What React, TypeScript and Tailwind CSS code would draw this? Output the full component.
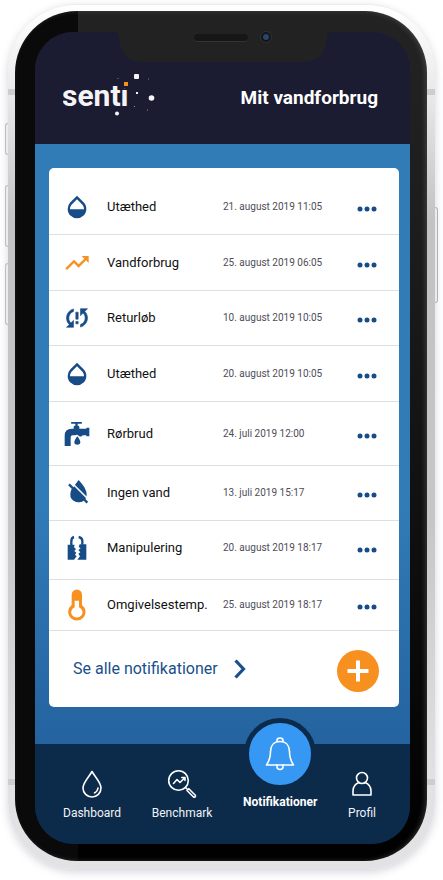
import type { ReactNode } from "react";
import { MdOpacity, MdTrendingUp } from "react-icons/md";

function FaucetIcon() {
  return (
    <svg width="26" height="26" viewBox="76 60 78 78" fill="currentColor" aria-hidden="true">
      <rect x="97" y="63" width="33" height="5" rx="2" />
      <rect x="110" y="66" width="7" height="12" />
      <path d="M105 83v-5q0-4 4-4h9q4 0 4 4v5h21v-3h9v26h-9v-3h-11q-4 6-11 2-6-7-12-2h-7q-6 0-6 6v26H78V104q0-21 21-21z" />
      <path d="M116 106q9 12 9 17a9 8 0 0 1-18 0q0-5 9-17z" stroke="#fff" strokeWidth="3" paintOrder="stroke" />
    </svg>
  );
}

function BackflowIcon() {
  return (
    <svg width="28" height="28" viewBox="0 0 24 24" fill="currentColor" stroke="currentColor" strokeWidth="0.500" aria-hidden="true">
      <path d="M3 12c0 2.210.91 4.200 2.360 5.640L3 20h6v-6l-2.240 2.240C5.680 15.150 5 13.660 5 12c0-2.610 1.670-4.830 4-5.650V4.260C5.550 5.150 3 8.270 3 12zm8 5h2v-2h-2v2zM21 4h-6v6l2.240-2.240C18.320 8.850 19 10.340 19 12c0 2.610-1.670 4.830-4 5.650v2.090c3.450-.89 6-4.010 6-7.740 0-2.210-.91-4.200-2.360-5.640L21 4zm-10 9h2V7h-2v6z" />
    </svg>
  );
}

function NoWaterIcon() {
  return (
    <svg width="28" height="28" viewBox="9 10 84 84" fill="none" aria-hidden="true">
      <path d="M56 13C68 26 80 42 80 57a23 23 0 0 1-46 0C34 42 45 26 56 13z" fill="currentColor" />
      <path d="M36 22l54 54" stroke="#fff" strokeWidth="5" />
      <path d="M36 38C32 46 31 52 31 56a24 22 0 0 0 41 17z" fill="currentColor" />
      <path d="M27 26l55 55" stroke="currentColor" strokeWidth="7" />
    </svg>
  );
}

function BrokenLockIcon() {
  return (
    <svg width="26" height="26" viewBox="74 399 78 78" fill="currentColor" aria-hidden="true">
      <path d="M85 428h21l-2 8 6 5-5 6 6 5-4 6 5 5-8 10H85z" />
      <path d="M141 427h-20l-3 8 6 4-7 5 6 7-6 4 5 8-8 10h27z" />
      <path d="M96 430v-12q0-11 8-13" fill="none" stroke="currentColor" strokeWidth="7" />
      <path d="M129 428v-11q0-10-11-12" fill="none" stroke="currentColor" strokeWidth="7" />
    </svg>
  );
}

function ThermometerIcon() {
  return (
    <svg width="18" height="32" viewBox="91 562 54 96" aria-hidden="true">
      <path
        d="M102 610V579a15.500 15.500 0 0 1 31 0v31a26 26 0 1 1-31 0z"
        fill="#f7901e"
      />
      <path d="M111 597h13v20a17 16 0 1 1-13 0z" fill="#fff" />
    </svg>
  );
}

function MoreIcon() {
  return (
    <svg width="20" height="6" viewBox="0 0 20 6" fill="currentColor" aria-hidden="true">
      <circle cx="3" cy="3" r="2.500" />
      <circle cx="10" cy="3" r="2.500" />
      <circle cx="17" cy="3" r="2.500" />
    </svg>
  );
}

function SentiLogo() {
  return (
    <svg width="96" height="48" viewBox="0 0 96 48" role="img" aria-label="senti" fill="#f4f4f6">
      <text x="-1" y="34" fontSize="30" fontWeight="700" fontFamily="Roboto, sans-serif">
        senti
      </text>
      <rect x="58" y="8" width="10" height="8" fill="#1b1b32" />
      <rect x="61" y="10" width="4" height="4" fill="#f7901e" />
      <rect x="71" y="2" width="5" height="5" rx="1" />
      <rect x="73" y="20" width="2" height="2" />
      <circle cx="88.500" cy="26" r="2.800" />
      <circle cx="54" cy="41.500" r="2" />
      <circle cx="55" cy="6.500" r="0.500" opacity="0.600" />
      <circle cx="85.500" cy="7" r="0.500" opacity="0.600" />
      <circle cx="71.500" cy="34.500" r="0.600" opacity="0.600" />
      <circle cx="84.500" cy="38" r="0.600" opacity="0.600" />
    </svg>
  );
}

function Notch() {
  return (
    <svg
      className="absolute top-0 left-1/2 -translate-x-1/2"
      width="216"
      height="31"
      viewBox="0 0 216 31"
      aria-hidden="true"
    >
      <path d="M0 0q4 0 4 6Q6 30 28 30h160q22 0 24-24 0-6 4-6z" fill="#222" />
    </svg>
  );
}

const stroke = {
  fill: "none",
  stroke: "#fff",
  strokeWidth: 1.6,
  strokeLinecap: "round",
  strokeLinejoin: "round",
} as const;

function DropIcon() {
  return (
    <svg width="28" height="28" viewBox="0 0 28 28" {...stroke} aria-hidden="true">
      <path d="M14 1.500C11 7 5 12.500 5 18a9 9 0 0 0 18 0C23 12.500 17 7 14 1.500z" />
      <path d="M20 18q-.5 3.500-3.500 5" />
    </svg>
  );
}

function BenchmarkIcon() {
  return (
    <svg width="30" height="30" viewBox="0 0 30 30" {...stroke} aria-hidden="true">
      <circle cx="11.500" cy="11.500" r="9.800" />
      <path d="M6.500 14.500l3.500-4 3 3 5-5M14.800 8.500H18v3" />
      <path d="M18.500 18.500l2 2M20 21.500l1.800-1.800 6.500 6.500a1.300 1.300 0 0 1-1.800 1.800z" />
    </svg>
  );
}

function BellIcon() {
  return (
    <svg width="30" height="34" viewBox="0 0 30 34" {...stroke} aria-hidden="true">
      <path d="M12 4.500V3.500a3 2.500 0 0 1 6 0v1" />
      <path d="M15 4.500c-6 0-9.500 4-9.500 10 0 6-1 9-4 13.500h27c-3-4.500-4-7.500-4-13.500 0-6-3.500-10-9.500-10z" />
      <path d="M12 28v1.500a3 3 0 0 0 6 0V28" />
    </svg>
  );
}

function ProfileIcon() {
  return (
    <svg width="22" height="26" viewBox="0 0 22 26" {...stroke} aria-hidden="true">
      <circle cx="11" cy="7" r="5.500" />
      <path d="M8 11.500C4 13 2 16 2 20v4h18v-4c0-4-2-7-6-8.500" />
    </svg>
  );
}

type Notification = { label: string; date: string; icon: ReactNode; row: string };

const notifications: Notification[] = [
  { label: "Utæthed", date: "21. august 2019 11:05", icon: <MdOpacity size={28} />, row: "h-[67px] pt-3" },
  { label: "Vandforbrug", date: "25. august 2019 06:05", icon: <MdTrendingUp size={28} color="#f7901e" />, row: "h-[56px]" },
  { label: "Returløb", date: "10. august 2019 10:05", icon: <BackflowIcon />, row: "h-[55px]" },
  { label: "Utæthed", date: "20. august 2019 10:05", icon: <MdOpacity size={28} />, row: "h-[56px]" },
  { label: "Rørbrud", date: "24. juli 2019 12:00", icon: <FaucetIcon />, row: "h-[64px]" },
  { label: "Ingen vand", date: "13. juli 2019 15:17", icon: <NoWaterIcon />, row: "h-[55px]" },
  { label: "Manipulering", date: "20. august 2019 18:17", icon: <BrokenLockIcon />, row: "h-[59px] pb-1" },
  { label: "Omgivelsestemp.", date: "25. august 2019 18:17", icon: <ThermometerIcon />, row: "h-[51px]" },
];

function NotificationRow({ label, date, icon, row }: Notification) {
  return (
    <li
      className={`grid grid-cols-[44px_116px_1fr_auto] items-center border-b border-[#dedfe1] pr-[22px] pl-[14px] text-[#184c86] ${row}`}
    >
      <span className="flex w-7 justify-center">{icon}</span>
      <span className="text-[13px] leading-4 text-[#111]">{label}</span>
      <time className="text-[10px] leading-4 text-[#4d4d58]">{date}</time>
      <button type="button" aria-label={`Flere valg for ${label}`} className="flex items-center pt-1">
        <MoreIcon />
      </button>
    </li>
  );
}

function NavItem({ label, icon }: { label: string; icon: ReactNode }) {
  return (
    <a href="#" className="flex flex-col items-center gap-[5px] pt-6 text-[12px] leading-4 text-[#f0f3f7]">
      <span className="flex h-8 items-center justify-center">{icon}</span>
      {label}
    </a>
  );
}

export default function App() {
  return (
    <div className="min-h-screen bg-white px-2 pt-1 pb-3 font-['Roboto',sans-serif]">
      <div className="relative rounded-[68px] border-t border-[#ececec] bg-[linear-gradient(#fff,#ececec_9%,#c2c2c2_25%,#c6c6c6_60%,#e2e2e4_90%,#e2e2e4)] pt-1.5 pr-2 pb-2 pl-[7px] shadow-[0_3px_8px_rgba(60,60,100,0.22)]">
        <span className="absolute top-[118px] -left-[3px] h-8 w-[3px] rounded-l-sm border border-r-0 border-[#bdbdc3] bg-[#ececf0]" />
        <span className="absolute top-[180px] -left-[3px] h-[62px] w-[3px] rounded-l-sm border border-r-0 border-[#bdbdc3] bg-[#ececf0]" />
        <span className="absolute top-[258px] -left-[3px] h-[62px] w-[3px] rounded-l-sm border border-r-0 border-[#bdbdc3] bg-[#ececf0]" />
        <span className="absolute top-[202px] -right-[3px] h-24 w-[3px] rounded-r-sm border border-l-0 border-[#b0b0b6] bg-[#ececf0]" />
        <span className="absolute inset-x-0 top-[84px] h-1.5 bg-[#cdcdcd]" />
        <span className="absolute inset-x-0 bottom-[84px] h-1.5 bg-[#cdcdcd]" />

        <div className="relative rounded-[62px] bg-[linear-gradient(#0a0a0a,#0a0a0a),linear-gradient(#232323,#1d1d1d_25%,#101010_60%,#000)] bg-[length:63px_100%,100%_100%] bg-no-repeat pt-[21px] pr-[17px] pb-[17px] pl-5 shadow-[inset_-2px_0_5px_rgba(120,120,120,0.35)]">
          <div className="relative overflow-hidden rounded-[38px] bg-[#0c2a4a]">
            <Notch />
            <header className="flex h-28 items-center justify-between bg-[#1b1b32] pt-5 pr-8 pl-7">
              <div className="-mt-1">
                <SentiLogo />
              </div>
              <h1 className="text-[19px] leading-6 font-bold text-white">Mit vandforbrug</h1>
            </header>

            <main className="bg-[linear-gradient(#317bb6,#317bb6_60%,#24639f)] pt-6 pr-[11px] pb-[37px] pl-[14px]">
              <section className="rounded-[5px] bg-white">
                <ul>
                  {notifications.map((item) => (
                    <NotificationRow key={item.date} {...item} />
                  ))}
                </ul>
                <div className="flex h-[76px] items-center justify-between pr-5 pl-6 text-[#1a4f8b]">
                  <a href="#" className="flex items-center gap-4 text-[16px] leading-6">
                    Se alle notifikationer
                    <svg width="12" height="20" viewBox="0 0 12 20" fill="none" stroke="currentColor" strokeWidth="3.200" aria-hidden="true">
                      <path d="M1.500 1.500l8 8.500-8 8.500" />
                    </svg>
                  </a>
                  <button
                    type="button"
                    aria-label="Tilføj notifikation"
                    className="mt-1 flex size-[42px] items-center justify-center rounded-full bg-[#f7901e]"
                  >
                    <svg width="22" height="22" viewBox="0 0 22 22" stroke="#fff" strokeWidth="4" aria-hidden="true">
                      <path d="M11 0.500v21M0.500 11h21" />
                    </svg>
                  </button>
                </div>
              </section>
            </main>

            <nav className="flex h-[100px] justify-between bg-[#0c2a4a] pr-[34px] pl-7">
              <NavItem label="Dashboard" icon={<DropIcon />} />
              <NavItem label="Benchmark" icon={<BenchmarkIcon />} />
              <a
                href="#"
                aria-current="page"
                className="-mt-[26px] flex flex-col items-center gap-1 text-[12px] leading-4 font-bold text-white"
              >
                <span className="flex size-[72px] items-center justify-center rounded-full border-[5px] border-[#0c2a4a] bg-[#3798f4]">
                  <BellIcon />
                </span>
                Notifikationer
              </a>
              <NavItem label="Profil" icon={<ProfileIcon />} />
            </nav>
          </div>

          <span className="absolute top-[23px] left-1/2 h-2 w-[54px] -translate-x-1/2 rounded-full border-b border-[#333] bg-[#161616]" />
          <span className="absolute top-[20px] left-1/2 ml-[39px] flex size-3 items-center justify-center rounded-full border border-[#333] bg-[#141414]">
            <span className="size-1.5 rounded-full bg-[#27456f]" />
          </span>
        </div>
      </div>
    </div>
  );
}
